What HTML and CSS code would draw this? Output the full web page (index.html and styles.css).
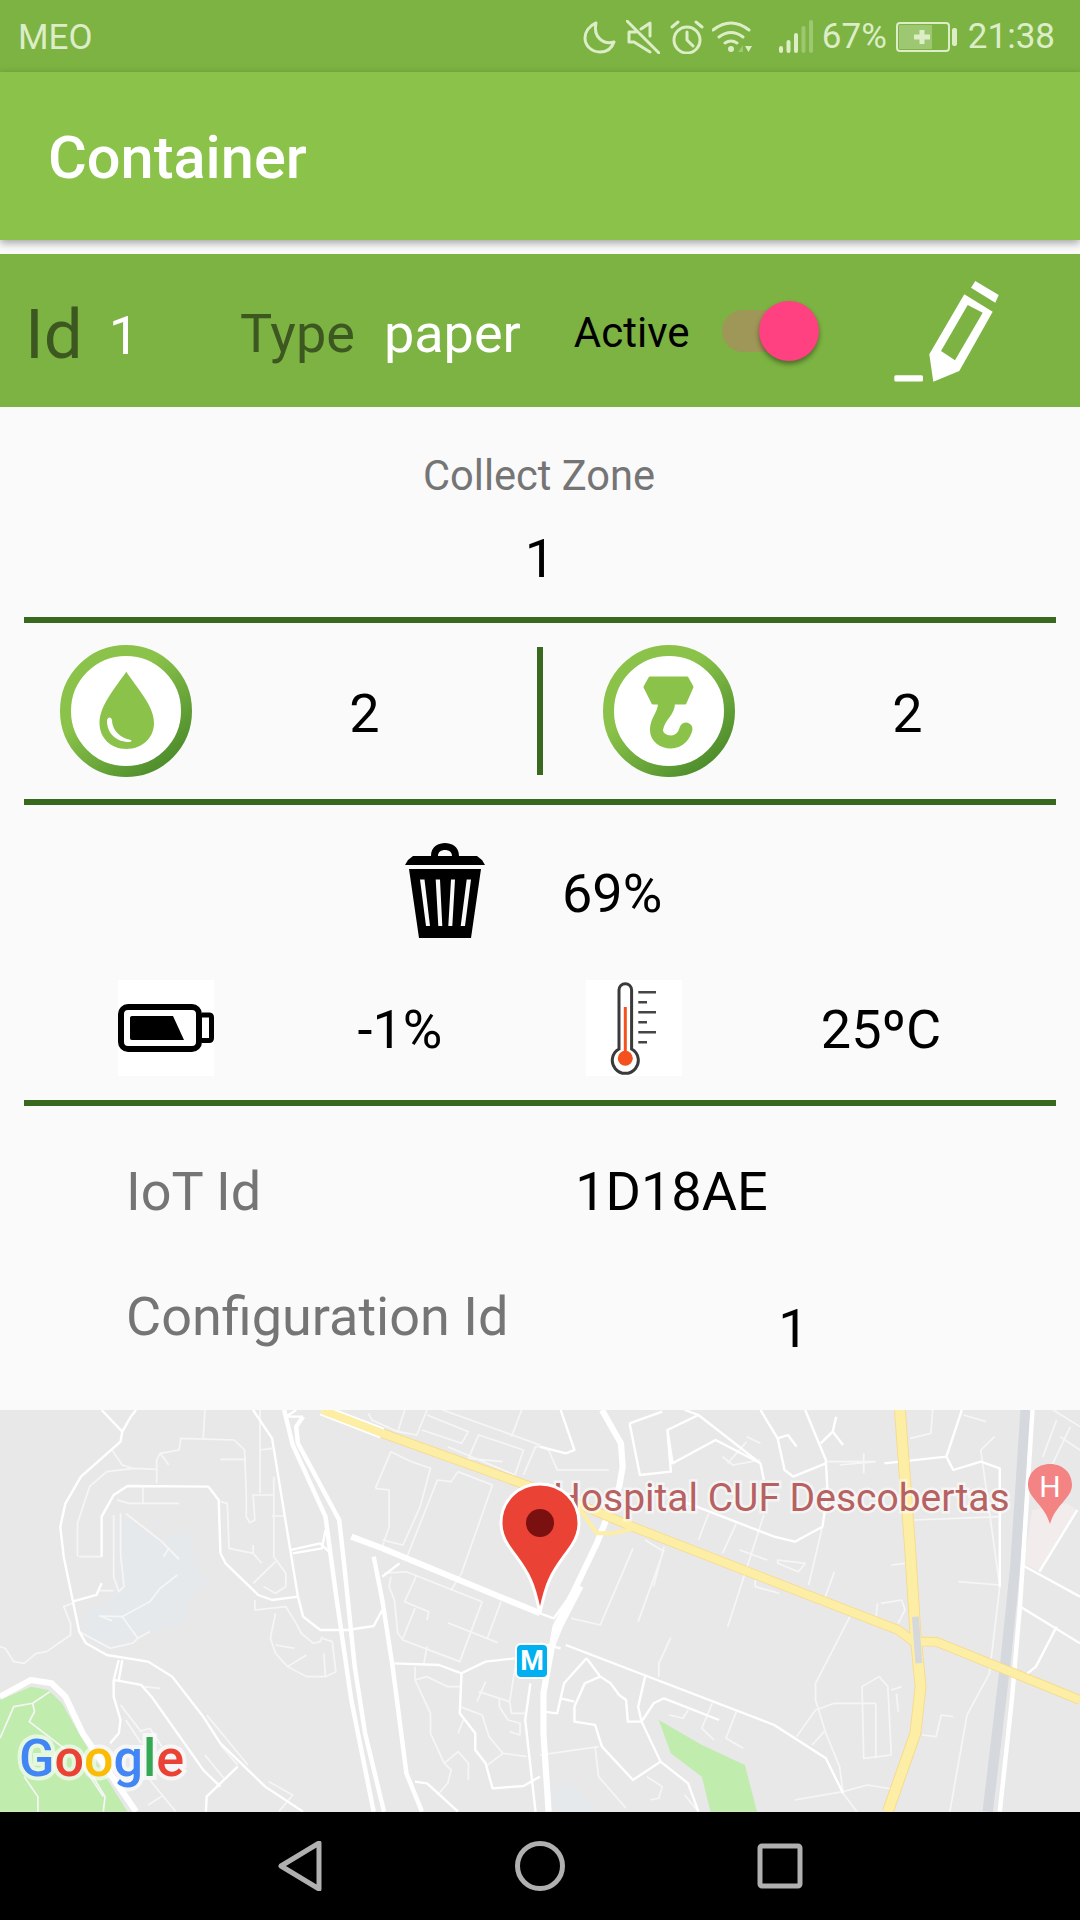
FILE: index.html
```html
<!DOCTYPE html>
<html lang="en">

<head>
    <meta charset="UTF-8">
    <meta name="viewport" content="width=device-width, initial-scale=1.0">
    <title>Container</title>
    <link rel="stylesheet" href="styles.css">
</head>

<body>
    <div class="screen">
        <div class="status-bar">
            <span class="carrier">MEO</span>
            <div class="status-icons">
                <svg class="s-moon" width="34" height="34" viewBox="0 0 34 34"><path d="M13 3C6 6 2 12 2 18C2 26 9 32 17 32C24 32 29 28 31 22C20 25 10 17 13 3Z" /></svg>
                <svg class="s-mute" width="34" height="34" viewBox="0 0 34 34"><path d="M10 12H3V22H8L24 32M24 16V3L15 9M1 1L33 33" /></svg>
                <svg class="s-alarm" width="34" height="34" viewBox="0 0 34 34"><circle cx="17" cy="20" r="13" /><path d="M17 12V20L23 26M2 7L8 2M26 2L32 7" /></svg>
                <svg class="s-wifi" width="40" height="34" viewBox="0 0 40 34">
                    <path d="M1 10Q19 -4 37 10M7 17Q19 8 31 17M13 23Q19 19 25 23" />
                    <circle class="solid" cx="19" cy="29" r="3" />
                    <path class="dim" d="M26 32L31 25V32Z" />
                    <path class="solid" d="M33 26H40L36.500 32Z" />
                </svg>
                <svg class="s-signal" width="36" height="34" viewBox="0 0 36 34">
                    <rect x="0" y="26" width="4" height="7" rx="2" />
                    <rect x="7.500" y="20" width="4" height="13" rx="2" />
                    <rect x="15" y="13" width="4" height="20" rx="2" />
                    <rect class="dim" x="22.500" y="6" width="4" height="27" rx="2" />
                    <rect class="dim" x="30" y="0" width="4" height="33" rx="2" />
                </svg>
                <span class="status-text pct">67%</span>
                <svg class="s-batt" width="62" height="30" viewBox="0 0 62 30">
                    <rect class="outline" x="1" y="1" width="52" height="28" rx="3" />
                    <rect class="level" x="3" y="3" width="33" height="24" rx="1" />
                    <path class="solid" d="M23.500 8H28.500V12.500H34V17.500H28.500V22H23.500V17.500H18V12.500H23.500Z" />
                    <rect class="solid" x="56" y="6" width="5" height="18" rx="2" />
                </svg>
                <span class="status-text clock">21:38</span>
            </div>
        </div>

        <header class="toolbar">Container</header>

        <div class="info-bar">
            <span class="id-label">Id</span>
            <span class="id-value">1</span>
            <span class="type-label">Type</span>
            <span class="type-value">paper</span>
            <span class="active-label">Active</span>
            <div class="switch"><span class="thumb"></span></div>
            <svg class="edit-icon" width="130" height="120" viewBox="0 0 130 120">
                <rect x="13.300" y="104.300" width="28.700" height="6.300" rx="1.500" />
                <path d="M94.300 10L117.700 24L114.300 31.700L90 16.700Z" />
                <path fill-rule="evenodd" d="M83.300 23.300L111.700 40.700L78.300 100L52.300 110.700L48.300 83.300ZM86.700 34L60 80L74 89.300L101.700 41.700Z" />
            </svg>
        </div>

        <section class="collect">
            <div class="collect-label">Collect Zone</div>
            <div class="collect-value">1</div>
        </section>
        <div class="rule"></div>

        <section class="levels">
            <div class="level-cell">
                <svg class="ring" width="132" height="132" viewBox="0 0 132 132">
                    <defs>
                        <linearGradient id="ringgrad" x1="0.150" y1="0.100" x2="0.850" y2="0.950">
                            <stop offset="0.300" stop-color="#8bc34a" />
                            <stop offset="1" stop-color="#4c8c2b" />
                        </linearGradient>
                    </defs>
                    <circle class="ring-line" cx="66" cy="66" r="60.500" />
                    <path class="ring-mark" d="M66.300 26.700C56 42 39.500 60 39.500 78C39.500 93 51 104 66.300 104C82 104 94 93 94 78C94 60 76 42 66.300 26.700Z" />
                    <path class="ring-shine" d="M47 76C47 72 51 71 52 75C52 85 60 93 71 95C72 96 71 97 69 97C56 97 47 88 47 76Z" />
                </svg>
                <span class="value">2</span>
            </div>
            <div class="divider"></div>
            <div class="level-cell">
                <svg class="ring" width="132" height="132" viewBox="0 0 132 132">
                    <circle class="ring-line" cx="66" cy="66" r="60.500" />
                    <path class="ring-mark hook-top" d="M47 33H84L89 42L82 58H50L42 42Z" />
                    <path class="ring-mark" d="M55 58H72C72 70 62 74 60 85H47C47 72 55 68 55 58Z" />
                    <path class="hook-line" d="M53.500 85C53.500 92 60 97 68 97C76 97 81 91 83 84" />
                </svg>
                <span class="value">2</span>
            </div>
        </section>
        <div class="rule"></div>

        <section class="fill-row">
            <svg class="trash" width="100" height="110" viewBox="0 0 100 110">
                <path d="M36 20C36 10 44 7 50 7C56 7 64 10 64 20H57C57 16 54 14 50 14C46 14 43 16 43 20Z" />
                <path d="M18 20H82L87 24L90 29H10L13 24Z" />
                <path fill-rule="evenodd" d="M14 33H86L76 102H24ZM25 43.500L31 90H35L29.500 43.500ZM40.700 43.500L43.300 90H47.300L45 43.500ZM56 43.500L53.300 90H57.300L60 43.500ZM71.700 43.500L65.700 90H70L76 43.500Z" />
            </svg>
            <span class="value">69%</span>
        </section>

        <section class="sensors">
            <div class="sensor-cell">
                <svg class="tile" width="96" height="96" viewBox="0 0 96 96">
                    <rect class="tile-bg" width="96" height="96" />
                    <rect class="batt-body" x="3" y="27" width="78" height="42" rx="7" />
                    <path class="batt-nub" d="M84 35H91C92.500 35 93.500 36 93.500 37.500V58C93.500 59.500 92.500 60.500 91 60.500H84" />
                    <path d="M14 36H55L66 60H14C12.500 60 12 59 12 58V38C12 37 12.500 36 14 36Z" />
                </svg>
                <span class="value">-1%</span>
            </div>
            <div class="sensor-cell">
                <svg class="tile" width="96" height="96" viewBox="0 0 96 96">
                    <rect class="tile-bg" width="96" height="96" />
                    <path class="thermo-glass" d="M33 69V10A6.300 6.300 0 0 1 45.600 10V69A13 13 0 1 1 33 69Z" />
                    <rect class="thermo-red" x="37.800" y="27" width="3" height="50" />
                    <circle class="thermo-red" cx="39.300" cy="78.300" r="7.500" />
                    <path class="thermo-ticks" d="M52.300 12.300H70M52.300 22.300H61M52.300 32.300H70M52.300 42.300H61M52.300 52.300H70M52.300 62.300H61" />
                </svg>
                <span class="value">25ºC</span>
            </div>
        </section>
        <div class="rule"></div>

        <section class="details">
            <div class="detail-row">
                <span class="detail-label">IoT Id</span>
                <span class="value">1D18AE</span>
            </div>
            <div class="detail-row">
                <span class="detail-label">Configuration Id</span>
                <span class="value config-value">1</span>
            </div>
        </section>

        <div class="map">
            <svg class="map-roads" width="1080" height="402" viewBox="0 0 1080 402">
                <g transform="scale(.3444 .3333) translate(0 -30)">
                    <path class="park" d="M0 900L90 860L140 870L180 910L240 1020L370 1235H0Z" />
                    <path class="lake" d="M350 340L470 425L500 410L530 395L560 420L560 470L605 545L545 600L545 665L430 700L330 745L260 710L235 650L320 600L345 540Z" />

                    <g class="thin">
                        <path d="M225 470V370L260 260L310 215L390 205L455 208" />
                        <path d="M455 250V180L465 160L520 150L525 115L680 120L710 150L715 280V350L725 368L740 360L735 285H795" />
                        <path d="M595 30L590 115M640 178H715M755 30V280M755 150L790 145M795 230V470L830 520V560L800 580L765 560" />
                        <path d="M790 348H830M800 485L735 550M640 305L660 310L665 445L735 460L760 490M735 435V460" />
                        <path d="M465 160L490 195M325 150L355 195L385 205M330 345V530L345 575L360 560L350 460V340M415 260V310M340 300L375 310H520" />
                        <path d="M230 470H295M290 572H330M365 340L470 425L520 478M475 470L490 445M515 525L465 565L435 605L355 650L290 648L325 662M355 650L400 715L435 695M230 695L320 745L385 730L400 715" />
                        <path d="M210 610L185 620L205 670V705L135 755L105 760L70 790L40 785L15 745L0 740" />
                        <path d="M740 600V630L830 620L860 670L875 700L910 730L930 725L935 710M800 640L785 715L800 760L835 800L890 830H945L975 815L965 725L935 715M800 735L855 745M835 800L890 765M940 760L945 830" />
                        <path d="M1090 265L1135 155L1195 185L1250 205L1220 320L1170 435L1110 420M1090 265L1130 270V380L1110 440" />
                        <path d="M1180 475L1270 240L1310 245L1330 215L1430 255L1340 520L1310 570" />
                        <path d="M1115 520L1180 515L1400 605L1335 785L1170 720L1155 700L1145 600L1130 560L1135 530" />
                        <path d="M1210 525L1175 605L1245 635L1240 660M1205 625L1170 715M1300 668L1445 728M1455 605L1415 715M1240 740L1230 795" />
                        <path d="M1205 800V840L1250 940V1000L1290 1090L1330 1055L1360 1090V1140M1205 840L1240 830L1300 860H1340M1330 1000L1345 960M1335 920L1400 945L1420 1010L1460 1060L1530 1070M1460 1060L1410 1100M1385 905L1410 845M1390 875L1480 905L1500 775M1480 905L1485 940H1530M1450 895V920L1475 960L1510 970V1005L1480 995" />
                        <path d="M1290 1090L1310 1110L1300 1150L1270 1185M1070 40L1080 60L1155 95L1210 105L1240 30M1155 95L1175 30M1225 90L1340 130L1360 95L1240 45M1300 140L1495 225L1520 150L1390 105L1360 175L1460 185M1485 110L1515 30M1520 225L1555 140H1568M1285 30L1568 135" />
                        <path d="M350 915L410 995M365 960L410 1030M405 995L435 985L470 1040M415 860L465 865M435 1140L510 1235M430 1215L475 1185M70 1130L110 1190V1235M270 1130L305 1190L300 1235M595 1065L650 1135M600 945L720 1095M640 1035L690 1095M780 1145L850 1185L810 1235" />
                        <path d="M0 1015L40 920L95 910L100 935L85 965L135 1005L230 1080L300 1190M95 910L145 875" />
                    </g>

                    <g class="mid">
                        <path d="M355 95L350 125L235 230L190 310L175 380L185 470L230 695L250 730L310 765L430 785L500 830L590 950L640 1030L770 1160L880 1235" />
                        <path d="M295 30L355 95L380 50L395 30" />
                        <path d="M295 470V350L330 285L370 258L605 260L635 300L640 460L655 490L750 585L790 600L865 590L880 650L930 690H1010L1085 678L1110 630" />
                        <path d="M735 30L790 115L865 590" />
                        <path d="M1145 790L1275 795L1340 820L1410 785L1495 775M1340 820L1335 940L1380 1000V1050L1410 1090L1430 1165L1520 1158L1568 1130" />
                        <path d="M330 840L410 855L440 890L590 1110L640 1160M330 840V890L350 960L345 1000L320 1030M345 780L330 840M355 780L345 840" />
                        <path d="M845 450L930 430L960 460M850 460L935 445L945 390M210 605L280 585L295 550M690 1100L600 1190L598 1235M1205 1145L1240 1150L1330 1235" />
                        <path d="M860 30L830 50L880 50M1110 530L1160 490M1540 850L1525 960L1555 1235" />
                    </g>

                    <g class="big">
                        <path d="M825 30L850 135L945 350L975 580L1020 900L1085 1235" />
                        <path d="M865 130L985 360L1000 500L1030 800L1060 1000L1115 1235M865 130L860 80L880 50" />
                        <path d="M1085 470L1110 600L1140 800L1180 1120L1225 1235" />
                    </g>
                    <path class="wide" d="M1020 410L1110 445L1568 640" />
                    <path class="wide" d="M0 890L90 840L150 850L190 890L240 1000L395 1235" />
                    <path class="road-casing pale" d="M935 30L1110 100" />
                    <path class="road-casing" d="M1110 100L1568 270" />
                    <path class="road-fill" d="M935 30L1110 100L1568 270" />
                </g>

                <g transform="translate(540 0) scale(.3444 .3333) translate(0 -30)">
                    <path class="park" d="M345 960L380 1060L470 1130L495 1235H630L595 1095L470 1035Z" />
                    <path class="lake" d="M45 1235L30 1170L100 1145L170 1235Z" />
                    <path class="clinic" d="M1430 330L1530 310L1560 330L1450 515L1405 490Z" />

                    <g class="thin">
                        <path d="M530 170L560 195L640 180M600 125L545 190M600 110L640 130M490 340L460 420M570 370L530 460M650 345L545 680M360 440L330 560M270 445L175 675L90 655M360 450L285 665M305 420L360 455M580 450L660 480M690 480L770 490L750 515L690 490Z" />
                        <path d="M820 380L780 555M855 515L825 600M625 540V560L695 580M900 650L800 850V900L830 1000L870 1100L880 1180L920 1235M990 610L1050 600L1060 630L1040 670M980 610L975 660" />
                        <path d="M345 830V790L380 712M500 910L470 985L505 1020M570 935L540 1015L590 1045M430 930L415 955L375 945M0 1065L170 1040M160 1040L170 1130L250 1225M310 1130L355 1160L345 1195L320 1200M740 1200L880 1175L950 1155L1040 1170M420 1185L460 1235" />
                        <path d="M935 860L985 830L1010 860L1020 1065L940 1075ZM975 910V1075M745 1010L800 930L855 910H975M1020 870L1050 860M1035 880L1040 935M790 1035L825 995M1110 1005L1150 1010L1165 945L1200 950" />
                        <path d="M1240 945L1305 820L1335 560L1280 150L1320 110M1240 945L1190 1235M1020 495L1060 490M1215 545L1335 555M1075 115L1135 100L1140 30M1230 45L1295 65M1085 360L1340 350M835 185H970M870 195L975 185M940 160V220" />
                        <path d="M0 140L25 150L50 210H200M1490 30L1568 80M1500 60L1460 170M1540 80L1480 210M1510 110L1568 150" />
                    </g>

                    <g class="mid">
                        <path d="M0 140L75 160L100 150L60 30M260 70L355 35M260 70L290 225L380 215L370 90L460 45L640 190L650 240M370 90L385 190L510 120L640 190M460 45L420 30" />
                        <path d="M640 30L690 115L710 210L735 230L830 190M770 30L830 180L835 280L820 380L740 425L680 410L380 290M690 115L720 105L745 140M815 130L850 95L880 135M850 95L860 50" />
                        <path d="M1000 190L1180 170L1225 30M1180 170L1200 210L1280 185L1335 205V560" />
                        <path d="M75 735L680 975L830 1075L880 1180M305 830L285 920L295 965L350 1085L430 1150L460 1235M135 775L175 830L205 850L230 885L250 900L255 965H295M175 830L130 850L100 920V965L160 975L180 1040L270 1140L350 1085M60 895L100 905M60 895L50 940L10 935M135 775L70 850L60 895M360 895L520 960M360 895L330 910L295 965" />
                        <path d="M1395 620L1568 730M1400 495L1568 590M1500 680L1440 800L1410 825M1560 330L1450 515M0 640L40 655L100 570M0 730L60 745" />
                    </g>

                    <path class="wide" d="M180 30L235 130L240 200L230 260L165 430L100 570L45 680L10 880V1000L25 1235" />
                    <path class="big" d="M120 560L60 680L20 780" />
                    <path class="grey-road" d="M1410 30L1380 500L1350 800L1300 1235" />
                    <path class="big" d="M1430 30L1395 600L1370 900L1335 1235" />

                    <path class="road-casing" d="M60 290L280 385L1040 690L1085 725L1150 725L1568 900" />
                    <path class="road-casing vertical" d="M1045 30L1075 450L1090 700L1105 860L1090 1000L1010 1235" />
                    <path class="road-fill" d="M60 290L280 385L1040 690L1085 725L1150 725L1568 900" />
                    <path class="road-fill vertical" d="M1045 30L1075 450L1090 700L1105 860L1090 1000L1010 1235" />
                    <path class="road-fill thin-loop" d="M110 320L165 400L210 400L280 385" />
                    <path class="overpass" d="M1090 650L1100 790" />
                </g>
            </svg>

            <span class="map-label">Hospital CUF Descobertas</span>
            <svg class="h-pin" width="48" height="66" viewBox="0 0 48 66">
                <path d="M24 2C11 2 2 11 2 23C2 36 18 42 24 62C30 42 46 36 46 23C46 11 37 2 24 2Z" />
                <text x="24" y="35" text-anchor="middle">H</text>
            </svg>
            <span class="metro">M</span>
            <svg class="map-pin" width="84" height="136" viewBox="0 0 84 136">
                <path class="pin-body" d="M42 3C20 3 3 20 3 42C3 52 6 58 10 64C18 76 27 86 32 98C36 106 39 118 42 132C45 118 48 106 52 98C57 86 66 76 74 64C78 58 81 52 81 42C81 20 64 3 42 3Z" />
                <circle class="pin-dot" cx="42" cy="42" r="14" />
            </svg>
            <div class="google"><span class="g-blue">G</span><span class="g-red">o</span><span class="g-yellow">o</span><span class="g-blue">g</span><span class="g-green">l</span><span class="g-red">e</span></div>
        </div>

        <nav class="nav-bar">
            <svg width="50" height="50" viewBox="0 0 50 50"><path d="M6 25L44 2V48Z" /></svg>
            <svg width="50" height="50" viewBox="0 0 50 50"><circle cx="25" cy="25" r="22.500" /></svg>
            <svg width="50" height="50" viewBox="0 0 50 50"><rect x="5" y="5" width="40" height="40" rx="2" /></svg>
        </nav>
    </div>
</body>

</html>
```

FILE: styles.css
```css
body {
    margin: 0;
    background-color: #fafafa;
    font-family: Roboto, "Liberation Sans", sans-serif;
}

.screen {
    width: 1080px;
    height: 1920px;
    display: flex;
    flex-direction: column;
    overflow: hidden;
}

/* status bar */
.status-bar {
    height: 72px;
    flex: none;
    box-sizing: border-box;
    display: flex;
    align-items: center;
    justify-content: space-between;
    padding: 2px 25px 0 18px;
    background-color: #7cb342;
    color: #dcedc8;
    font-size: 35px;
}

.status-icons {
    display: flex;
    align-items: center;
}

.status-icons svg {
    fill: none;
    stroke: #dcedc8;
    stroke-width: 3;
    stroke-linecap: round;
    stroke-linejoin: round;
}

.status-icons .solid {
    fill: #dcedc8;
    stroke: none;
}

.status-icons .dim {
    fill: #dcedc8;
    stroke: none;
    opacity: 0.35;
}

.s-mute {
    margin-left: 9px;
}

.s-alarm {
    margin-left: 10px;
}

.s-wifi {
    margin-left: 8px;
}

.s-signal {
    margin-left: 27px;
}

.s-signal rect {
    fill: #dcedc8;
    stroke: none;
}

.status-text {
    line-height: 40px;
}

.pct {
    margin-left: 7px;
}

.s-batt {
    margin-left: 9px;
}

.s-batt .outline {
    stroke-width: 2;
}

.s-batt .level {
    fill: #dcedc8;
    stroke: none;
    opacity: 0.35;
}

.clock {
    margin-left: 10px;
}

/* toolbar */
.toolbar {
    height: 168px;
    flex: none;
    box-sizing: border-box;
    display: flex;
    align-items: center;
    padding: 3px 0 0 48px;
    background-color: #8bc34a;
    color: #fff;
    font-size: 59.500px;
    font-weight: 500;
    box-shadow: 0 3px 8px rgba(0, 0, 0, 0.35);
    position: relative;
}

/* id / type row */
.info-bar {
    height: 153px;
    flex: none;
    margin-top: 14px;
    display: flex;
    align-items: center;
    background-color: #7cb342;
    color: #fff;
    font-size: 54px;
}

.id-label {
    margin: 7px 0 0 25px;
    font-size: 69px;
    color: #3d5720;
}

.id-value {
    margin: 10px 0 0 26px;
}

.type-label {
    margin: 5px 0 0 101px;
    color: #3d5720;
}

.type-value {
    margin: 5px 0 0 29px;
}

.active-label {
    margin: 4px 0 0 53px;
    font-size: 42px;
    color: #000;
}

.switch {
    position: relative;
    width: 76px;
    height: 42px;
    margin: 0 0 0 32px;
    border-radius: 21px;
    background-color: #9f9757;
}

.thumb {
    position: absolute;
    top: -9px;
    right: -21px;
    width: 60px;
    height: 60px;
    border-radius: 50%;
    background-color: #ff4081;
    box-shadow: 0 3px 5px rgba(0, 0, 0, 0.4);
}

.edit-icon {
    margin-left: 83px;
    fill: #fff;
}

/* collect zone */
.collect {
    height: 210px;
    flex: none;
    text-align: center;
    font-size: 41.600px;
    color: #757575;
}

.collect-label {
    padding: 44px 2px 0 0;
    line-height: 50px;
}

.collect-value {
    margin-top: 26px;
    font-size: 54px;
    line-height: 64px;
    color: #000;
}

.rule {
    height: 6px;
    flex: none;
    margin: 0 24px;
    background-color: #38691f;
}

.value {
    font-size: 54px;
    color: #000;
}

/* drop and hook counters */
.levels {
    height: 176px;
    flex: none;
    display: grid;
    grid-template-columns: 1fr 6px 1fr;
    align-items: center;
}

.level-cell {
    display: flex;
    align-items: center;
    padding-left: 60px;
}

.level-cell .value {
    flex: 1;
    padding-top: 5px;
    text-align: center;
}

.divider {
    height: 128px;
    background-color: #38691f;
}

.ring-line {
    fill: #fff;
    stroke: url(#ringgrad);
    stroke-width: 11;
}

.ring-mark {
    fill: #8bc34a;
}

.ring-shine {
    fill: #fff;
}

.hook-top {
    stroke: #8bc34a;
    stroke-width: 3;
    stroke-linejoin: round;
}

.hook-line {
    fill: none;
    stroke: #8bc34a;
    stroke-width: 13;
    stroke-linecap: round;
}

/* fill level */
.fill-row {
    height: 175px;
    flex: none;
    display: flex;
    align-items: center;
    padding-left: 395px;
    gap: 67px;
}

.fill-row .value {
    margin-top: 1px;
}

.trash {
    margin-top: -4px;
}

/* battery and temperature */
.sensors {
    height: 120px;
    flex: none;
    display: grid;
    grid-template-columns: 468px 1fr;
    padding-left: 118px;
}

.sensor-cell {
    height: 96px;
    display: flex;
    align-items: center;
}

.sensor-cell .value {
    flex: 1;
    padding-top: 3px;
    text-align: center;
}

.tile-bg {
    fill: #fff;
}

.batt-body {
    fill: #fff;
    stroke: #000;
    stroke-width: 6;
}

.batt-nub {
    fill: none;
    stroke: #000;
    stroke-width: 5;
}

.thermo-glass {
    fill: #fff;
    stroke: #3a3a3a;
    stroke-width: 3;
}

.thermo-red {
    fill: #f4511e;
}

.thermo-ticks {
    fill: none;
    stroke: #454545;
    stroke-width: 2.500;
}

/* ids */
.details {
    height: 304px;
    flex: none;
    padding: 42px 0 0 126px;
    box-sizing: border-box;
}

.detail-row {
    display: flex;
    height: 125px;
}

.detail-label {
    font-size: 54px;
    color: #757575;
    line-height: 88px;
}

.detail-row .value {
    line-height: 88px;
}

.detail-label + .value {
    margin-left: 314px;
}

.detail-label + .config-value {
    margin-left: 270px;
    line-height: 112px;
}

/* map */
.map {
    position: relative;
    height: 402px;
    flex: none;
    overflow: hidden;
    background-color: #e8e8e8;
}

.map-roads {
    display: block;
}

.map-roads path {
    fill: none;
    stroke-linejoin: round;
}

.map-roads .park {
    fill: #c0ecae;
}

.map-roads .lake {
    fill: #e6e9ec;
}

.map-roads .clinic {
    fill: #f3ecec;
}

.thin path {
    stroke: #f6f6f6;
    stroke-width: 5;
}

.mid path {
    stroke: #fff;
    stroke-width: 7;
}

.big path,
path.big {
    stroke: #fff;
    stroke-width: 13;
}

path.wide {
    stroke: #fff;
    stroke-width: 18;
}

path.grey-road {
    stroke: #d5d8dc;
    stroke-width: 30;
}

path.road-casing {
    stroke: #f8d989;
    stroke-width: 29;
}

path.road-casing.pale {
    stroke: #fff;
    stroke-width: 34;
}

path.road-fill {
    stroke: #fdeea6;
    stroke-width: 24;
}

path.road-casing.vertical {
    stroke-width: 34;
}

path.road-fill.vertical {
    stroke-width: 29;
}

path.thin-loop {
    stroke-width: 12;
}

path.overpass {
    stroke: #d5d8dc;
    stroke-width: 20;
}

.map-label {
    position: absolute;
    left: 553px;
    top: 63px;
    font-size: 39px;
    line-height: 50px;
    white-space: nowrap;
    color: #b86161;
    -webkit-text-stroke: 5px rgba(255, 255, 255, 0.55);
    paint-order: stroke fill;
}

.h-pin {
    position: absolute;
    left: 1026px;
    top: 52px;
    fill: #f48484;
}

.h-pin text {
    fill: #fff;
    font-size: 30px;
    font-family: Roboto, sans-serif;
}

.metro {
    position: absolute;
    left: 515px;
    top: 233px;
    width: 34px;
    height: 36px;
    box-sizing: border-box;
    border: 2px solid #fff;
    border-radius: 6px;
    background-color: #00b0f0;
    color: #fff;
    font-size: 27px;
    font-weight: 700;
    line-height: 32px;
    text-align: center;
}

.map-pin {
    position: absolute;
    left: 498px;
    top: 71px;
}

.pin-body {
    fill: #ea4335;
    stroke: #fff;
    stroke-width: 3;
}

.pin-dot {
    fill: #7a1010;
}

.google {
    position: absolute;
    left: 19px;
    top: 319px;
    font-size: 52px;
    font-weight: 500;
    line-height: 60px;
    -webkit-text-stroke: 8px rgba(255, 255, 255, 0.6);
    paint-order: stroke fill;
}

.g-blue {
    color: #4285f4;
}

.g-red {
    color: #ea4335;
}

.g-yellow {
    color: #fbbc05;
}

.g-green {
    color: #34a853;
}

/* navigation */
.nav-bar {
    height: 108px;
    flex: none;
    display: flex;
    align-items: center;
    justify-content: center;
    gap: 190px;
    background-color: #000;
}

.nav-bar svg {
    fill: none;
    stroke: #b0b0b0;
    stroke-width: 5;
    stroke-linejoin: round;
}
```
